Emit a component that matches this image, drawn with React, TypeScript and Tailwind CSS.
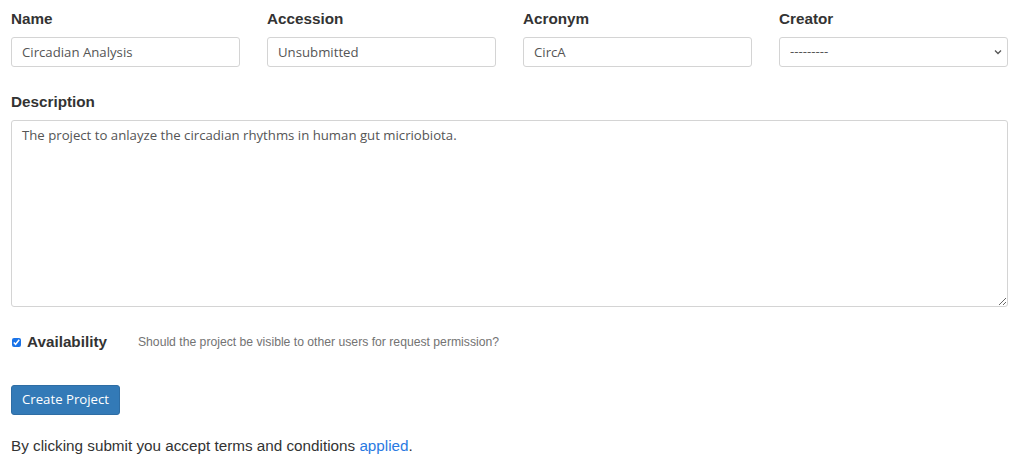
import React from "react";

const label = "block text-[15.25px] font-bold text-[#333] leading-[20px] mb-[8px]";
const field =
  "block w-full h-[30px] border border-[#d4d4d4] rounded-[3px] bg-white px-[10px] text-[13.2px] text-[#555] outline-none";
const openSans = { fontFamily: '"Open Sans", sans-serif' };

function Field({ name, value }: { name: string; value: string }) {
  return (
    <div>
      <label className={label}>{name}</label>
      <input className={field} style={openSans} defaultValue={value} />
    </div>
  );
}

export default function App() {
  return (
    <div
      className="bg-white w-[1011px] h-[459px] px-[11px] pt-[9px]"
      style={{ fontFamily: '"Liberation Sans", Arial, sans-serif' }}
    >
      <div className="grid grid-cols-4 gap-x-[27px] w-[997px]">
        <Field name="Name" value="Circadian Analysis" />
        <Field name="Accession" value="Unsubmitted" />
        <Field name="Acronym" value="CircA" />
        <div>
          <label className={label}>Creator</label>
          <div className="relative">
            <select className={field + " appearance-none"} style={openSans}>
              <option>---------</option>
            </select>
            <svg
              className="absolute right-[6px] top-[12px] pointer-events-none"
              width="8"
              height="6"
              viewBox="0 0 8 6"
            >
              <path d="M1 1.5 L4 4.5 L7 1.5" fill="none" stroke="#555" strokeWidth="1.3" />
            </svg>
          </div>
        </div>
      </div>

      <div className="mt-[25px] w-[997px]">
        <label className={label}>Description</label>
        <textarea
          className="block w-full h-[187px] border border-[#d4d4d4] rounded-[3px] bg-white px-[10px] py-[5px] text-[13.2px] leading-[18px] text-[#555] outline-none resize"
          style={openSans}
          defaultValue="The project to anlayze the circadian rhythms in human gut micriobiota."
        />
      </div>

      <div className="flex items-center mt-[25px] h-[20px]">
        <input
          type="checkbox"
          defaultChecked
          className="w-[9px] h-[9px] ml-[1px] mr-[6px] accent-[#1a73e8]"
        />
        <span className="text-[15.25px] font-bold text-[#333]">Availability</span>
        <span className="ml-[31px] text-[12.2px] text-[#737373]">
          Should the project be visible to other users for request permission?
        </span>
      </div>

      <button
        className="block mt-[33px] h-[30px] px-[10px] rounded-[3px] bg-[#337ab7] border border-[#2e6da4] text-white text-[13.2px]"
        style={openSans}
      >
        Create Project
      </button>

      <p className="mt-[21px] text-[15.25px] text-[#333] leading-[20px]">
        By clicking submit you accept terms and conditions{" "}
        <a className="text-[#2a7ae2]" href="#">
          applied
        </a>
        .
      </p>
    </div>
  );
}
